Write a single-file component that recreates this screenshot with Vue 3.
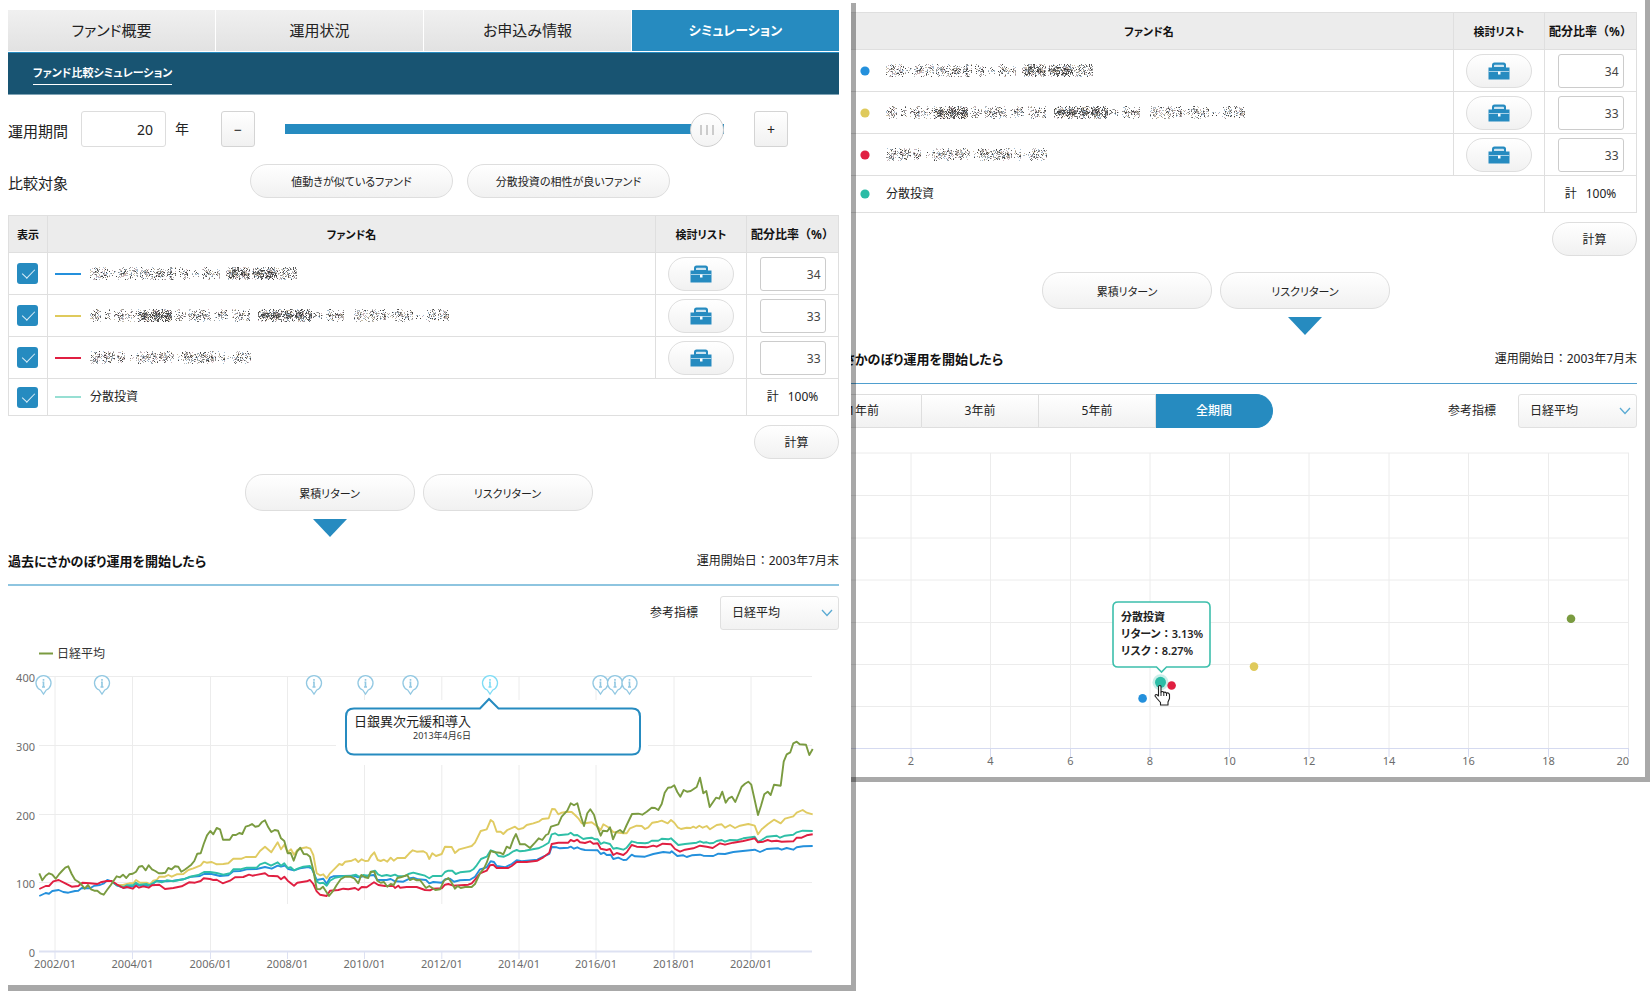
<script setup>
import { ref } from 'vue'

const tabs = ['ファンド概要', '運用状況', 'お申込み情報', 'シミュレーション']
const years = ref(20)
const periods = ['1年前', '3年前', '5年前', '全期間']

// Each masked name is a list of [start, end, density] runs along the line.
const funds = [
  { color: '#2490dc', share: 34, mask: [[0, 18, 0.5], [19, 27, 0.2], [28, 48, 0.42], [50, 86, 0.42], [89, 100, 0.34], [102, 110, 0.16], [112, 130, 0.4], [136, 160, 0.7], [162, 188, 0.7], [188, 207, 0.5]] },
  { color: '#dfca5c', share: 33, mask: [[0, 11, 0.42], [15, 21, 0.3], [24, 34, 0.45], [35, 48, 0.3], [48, 82, 0.75], [84, 96, 0.36], [98, 121, 0.45], [124, 138, 0.4], [142, 160, 0.4], [168, 222, 0.72], [223, 233, 0.25], [236, 254, 0.42], [264, 296, 0.4], [297, 304, 0.22], [305, 323, 0.45], [326, 334, 0.22], [336, 346, 0.32], [348, 359, 0.42]] },
  { color: '#e01f41', share: 33, mask: [[0, 25, 0.46], [27, 35, 0.36], [38, 44, 0.2], [46, 68, 0.4], [69, 84, 0.46], [86, 92, 0.2], [92, 126, 0.45], [128, 135, 0.38], [136, 141, 0.18], [142, 161, 0.42]] },
]

function speckle(runs, seed) {
  let s = seed
  const rnd = () => {
    s = (s + 0x6d2b79f5) | 0
    let t = Math.imul(s ^ (s >>> 15), 1 | s)
    t = (t + Math.imul(t ^ (t >>> 7), 61 | t)) ^ t
    return ((t ^ (t >>> 14)) >>> 0) / 4294967296
  }
  const shades = ['#666', '#999', '#bbb', '#cbbfa5', '#a5bed2', '#8a8a8a', '#ccb4bc', '#444']
  const paths = shades.map(() => '')
  for (const [a, b, density] of runs) {
    const half = density < 0.27 ? 3 : 6
    const dark = density > 0.6
    for (let x = a; x < b; x++) {
      const edge = 1 - 0.4 * Math.abs(Math.cos(((x - a) / 12) * Math.PI))
      for (let y = -half; y <= half; y++) {
        const fall = 1.3 - Math.abs(y) / (half + 1)
        if (rnd() < density * edge * fall * 1.35) {
          let k = Math.floor(rnd() * shades.length)
          if (dark && rnd() < 0.4) k = rnd() < 0.5 ? 0 : 7
          paths[k] += `M${x} ${y + 7}h1v1h-1z`
        }
      }
    }
  }
  return shades.map((fill, i) => ({ fill, d: paths[i] }))
}
const masks = funds.map((f, i) => speckle(f.mask, 4711 + i * 977))

// Line chart
const toPoints = (raw) =>
  raw.trim().split(/\s+/).map((p) => {
    const [x, y] = p.split(',').map(Number)
    return `${(x / 3).toFixed(1)},${(540 + y / 3).toFixed(1)}`
  }).join(' ')

const series = [
  {
    color: '#e0cb62',
    raw: `340,1028 350,1034 369,1035 388,1030 400,1030 408,1020 420,1028 440,1028 450,1033 460,1022 470,1020 478,1010 495,1010 505,1005 515,1010 530,1003 550,1002 565,990 580,985 602,976 611,965 620,968 635,966 650,973 670,972 685,970 700,956 725,956 737,951 767,951 780,933 795,920 814,937 833,907 843,928 853,914 863,937 873,928 882,944 892,930 905,925 920,922 931,926 940,945 950,1000 960,1006 970,1003 980,1015 990,1000 1005,985 1018,972 1027,975 1036,965 1055,962 1066,957 1075,966 1085,958 1095,963 1105,962 1113,948 1123,937 1133,960 1142,963 1152,959 1162,965 1172,953 1181,962 1192,954 1215,954 1228,940 1238,931 1250,935 1270,934 1280,940 1288,957 1297,940 1308,948 1325,942 1335,920 1355,921 1365,939 1378,928 1400,922 1415,918 1425,908 1442,873 1460,868 1472,840 1480,846 1490,875 1502,875 1510,882 1522,870 1545,860 1555,868 1570,864 1580,855 1600,850 1618,844 1627,837 1646,835 1656,807 1665,808 1675,823 1685,818 1702,815 1715,816 1725,825 1735,835 1745,850 1755,850 1775,847 1790,858 1802,870 1810,853 1825,862 1840,876 1870,880 1880,880 1890,865 1910,857 1925,858 1935,867 1945,862 1957,848 1975,845 1985,842 2003,850 2013,840 2023,848 2033,862 2043,867 2060,863 2072,864 2080,860 2088,864 2098,857 2108,863 2120,858 2130,868 2150,855 2165,853 2175,863 2190,855 2205,864 2220,857 2245,852 2264,857 2274,883 2285,868 2303,853 2322,839 2342,850 2355,836 2380,829 2390,818 2408,810 2420,818 2438,823`,
  },
  {
    color: '#2490dc',
    raw: `118,1068 137,1059 147,1061 157,1053 176,1050 190,1056 205,1058 225,1053 235,1052 245,1044 270,1045 283,1037 300,1035 312,1030 322,1020 335,1024 350,1036 370,1043 400,1039 410,1034 420,1037 450,1037 470,1023 500,1024 520,1022 550,1018 575,1010 600,1008 612,1002 635,1002 660,1008 685,1006 700,994 720,993 740,988 770,987 795,981 815,986 833,977 843,980 855,977 865,987 882,991 900,985 925,981 935,985 950,1020 970,1016 980,1031 990,1013 1000,1009 1060,1007 1075,1012 1090,1009 1122,1005 1132,1020 1160,1020 1172,1017 1185,1024 1210,1025 1230,1015 1240,1013 1255,1018 1278,1020 1288,1030 1300,1026 1325,1028 1335,1018 1350,1016 1362,1025 1380,1021 1410,1019 1425,1010 1440,988 1460,982 1472,964 1482,966 1490,978 1515,982 1535,972 1550,961 1565,964 1612,959 1630,950 1648,942 1655,921 1670,922 1680,925 1705,923 1713,920 1722,926 1732,922 1742,927 1755,930 1793,931 1802,942 1812,938 1820,945 1832,944 1840,957 1855,953 1870,960 1880,959 1895,944 1905,949 1935,950 1960,942 1990,936 2010,938 2015,934 2032,948 2050,946 2060,951 2075,946 2100,944 2110,947 2140,948 2155,941 2175,942 2200,936 2264,929 2280,936 2300,927 2335,925 2345,929 2360,924 2380,929 2390,922 2410,919 2438,918`,
  },
  {
    color: '#2fbfa7',
    raw: `340,1028 350,1036 370,1041 380,1036 400,1036 408,1028 418,1034 440,1032 448,1036 470,1023 485,1027 500,1021 520,1024 550,1018 570,1010 595,1005 612,996 630,996 650,999 670,1004 690,1000 700,988 720,988 740,983 770,983 780,973 795,968 813,977 833,967 843,977 853,970 863,984 872,982 882,991 895,985 910,980 930,978 940,992 950,1025 960,1030 970,1028 980,1037 990,1022 1005,1013 1020,1010 1035,1008 1055,1007 1068,1004 1078,1010 1090,1005 1105,1008 1115,995 1125,992 1134,1003 1145,1008 1160,1005 1172,1008 1185,1004 1195,1009 1215,1008 1225,1002 1240,998 1255,1002 1275,1007 1288,1015 1298,1008 1325,1008 1335,996 1345,992 1357,992 1367,1002 1380,997 1410,994 1420,988 1430,976 1443,957 1460,950 1472,931 1485,936 1495,948 1512,950 1525,944 1540,934 1550,930 1560,934 1575,932 1590,929 1615,925 1630,918 1646,908 1655,883 1665,880 1675,886 1690,884 1705,883 1712,878 1722,886 1732,885 1750,897 1760,895 1775,893 1785,898 1793,898 1802,912 1812,907 1830,912 1840,926 1850,924 1870,929 1880,923 1895,904 1910,908 1935,910 1945,908 1955,902 1975,902 1985,896 2005,898 2013,895 2025,906 2035,915 2055,912 2090,908 2100,904 2110,908 2120,907 2130,910 2140,909 2150,903 2165,900 2175,905 2190,900 2210,901 2230,895 2264,890 2274,905 2285,900 2300,890 2330,887 2340,893 2355,887 2380,884 2390,877 2408,872 2438,873`,
  },
  {
    color: '#e01f41',
    raw: `118,1047 137,1038 147,1038 160,1024 176,1020 196,1030 215,1040 235,1038 247,1028 270,1030 292,1032 302,1027 320,1023 335,1023 350,1033 370,1044 380,1041 398,1046 408,1037 417,1043 430,1039 446,1043 456,1036 478,1034 495,1047 520,1044 545,1039 567,1027 585,1028 602,1023 611,1015 630,1017 640,1020 650,1019 668,1030 690,1022 705,1012 730,1011 747,1004 757,1007 795,1000 805,1007 833,1009 843,1018 853,1010 863,1022 882,1037 892,1028 920,1024 930,1020 940,1032 950,1054 960,1064 980,1068 990,1052 1015,1050 1030,1046 1045,1048 1065,1044 1075,1050 1085,1041 1100,1042 1122,1027 1135,1035 1155,1038 1180,1038 1185,1044 1195,1037 1200,1043 1220,1041 1250,1041 1275,1050 1290,1051 1300,1046 1325,1045 1335,1034 1345,1032 1360,1037 1405,1034 1415,1030 1425,1019 1440,1000 1460,992 1470,976 1480,974 1490,984 1525,984 1535,978 1550,966 1580,966 1612,962 1630,952 1648,938 1655,912 1675,908 1705,908 1712,900 1722,904 1732,899 1740,907 1755,909 1770,904 1780,911 1793,910 1802,926 1820,930 1830,927 1840,945 1850,939 1870,945 1880,937 1895,915 1910,920 1940,922 1960,917 1970,920 1988,911 2013,913 2025,927 2040,935 2055,929 2080,925 2100,917 2120,920 2138,924 2160,910 2175,914 2200,908 2230,903 2264,895 2274,907 2290,905 2303,900 2315,904 2330,902 2345,905 2380,904 2390,893 2405,893 2420,886 2438,883`,
  },
  {
    color: '#7a9b40',
    raw: `118,1000 127,1021 137,1007 147,1000 157,1004 167,1016 176,1004 186,993 196,983 205,979 215,1002 225,1019 235,1025 244,1033 254,1046 264,1035 273,1048 283,1052 292,1052 301,1060 311,1064 321,1050 331,1037 340,1024 350,1009 360,1012 369,1004 379,1014 388,1003 398,1001 408,995 417,980 427,978 437,991 446,976 456,988 466,993 476,1000 486,1000 496,998 505,984 515,988 525,979 535,980 544,995 554,989 564,982 574,974 583,963 592,941 602,940 611,912 621,886 631,873 640,883 650,864 660,868 669,899 689,899 698,885 708,885 718,879 727,882 737,860 747,857 756,852 766,860 776,858 785,847 795,841 805,862 814,876 824,870 834,872 843,895 853,903 863,940 872,939 881,962 891,935 901,923 911,942 921,943 930,950 940,990 950,1047 960,1048 969,1040 987,1068 1000,1052 1010,1035 1022,1018 1035,1010 1050,1010 1063,1015 1075,1030 1084,1005 1095,1012 1105,1014 1112,995 1123,995 1132,1022 1142,1028 1152,1026 1162,1040 1172,1032 1181,1035 1192,1014 1202,1012 1222,1005 1230,1020 1240,1016 1250,1021 1260,1020 1278,1044 1288,1038 1306,1050 1320,1048 1332,1022 1345,1014 1355,1028 1365,1046 1373,1038 1382,1044 1395,1041 1415,1041 1425,1032 1440,1000 1452,985 1460,968 1472,933 1485,937 1500,938 1510,943 1520,920 1530,925 1540,898 1548,882 1560,913 1575,913 1590,924 1605,908 1616,895 1627,900 1638,885 1645,882 1653,860 1675,853 1685,830 1702,812 1712,790 1722,796 1732,790 1742,828 1752,858 1762,820 1771,808 1782,824 1792,860 1802,887 1809,872 1822,874 1830,862 1839,898 1848,877 1860,870 1870,878 1880,855 1896,822 1915,821 1927,824 1940,815 1955,803 1965,804 1975,810 1985,792 1994,758 2004,743 2014,742 2023,736 2032,756 2041,770 2051,750 2061,755 2072,753 2090,741 2100,713 2110,760 2119,753 2129,801 2148,773 2158,776 2167,755 2177,788 2186,775 2196,770 2206,786 2225,740 2235,731 2245,725 2254,734 2264,780 2274,825 2283,797 2293,763 2303,755 2312,765 2322,734 2342,737 2351,665 2360,643 2371,637 2380,610 2390,605 2399,613 2418,614 2428,645 2438,627`,
  },
].map((s) => ({ color: s.color, points: toPoints(s.raw) }))

const yTicks = [
  { v: 400, y: 676.5 }, { v: 300, y: 745.5 }, { v: 200, y: 814.5 }, { v: 100, y: 882.5 }, { v: 0, y: 951.5 },
]
const xTicks = [
  { t: '2002/01', x: 55, end: 951 }, { t: '2004/01', x: 132.5, end: 951 }, { t: '2006/01', x: 210.5, end: 951 },
  { t: '2008/01', x: 287.5, end: 904 }, { t: '2010/01', x: 364.5, end: 900 }, { t: '2012/01', x: 441.8, end: 904 },
  { t: '2014/01', x: 519, end: 951 }, { t: '2016/01', x: 596, end: 951 }, { t: '2018/01', x: 674, end: 951 },
  { t: '2020/01', x: 751, end: 951 },
]
const pins = [43.5, 102, 314, 365.5, 410.5, 490, 600.5, 615, 629.5]

// Scatter chart
const riskTicks = [911, 990.5, 1070.5, 1150, 1229.5, 1309, 1389, 1468.5, 1548.5, 1628.5].map((x, i) => ({ x, v: (i + 1) * 2 }))
const returnLines = [453, 495.5, 538, 580, 622.5, 664.5, 706.5]
const dots = [
  { x: 1142.6, y: 698.4, c: '#2490dc' }, { x: 1171.6, y: 685.5, c: '#e01f41' },
  { x: 1254, y: 666.6, c: '#dfca5c' }, { x: 1571, y: 618.8, c: '#7a9b40' },
]
</script>

<template>
  <div class="page">
    <main class="panel panel-main">
      <nav class="tabs">
        <button v-for="(t, i) in tabs" :key="t" type="button" class="tab" :class="{ active: i === 3 }">{{ t }}</button>
      </nav>
      <div class="subnav"><a href="#simulation">ファンド比較シミュレーション</a></div>

      <div class="term">
        <label class="term-label" for="years">運用期間</label>
        <input id="years" v-model="years" class="term-input" type="text" inputmode="numeric" />
        <span class="term-unit">年</span>
        <button type="button" class="step" aria-label="−" @click="years = Math.max(1, +years - 1)">−</button>
        <input v-model="years" class="slider" type="range" min="1" max="20" aria-labelledby="years" />
        <button type="button" class="step" aria-label="+" @click="years = Math.min(20, +years + 1)">+</button>
      </div>

      <div class="compare">
        <span class="term-label">比較対象</span>
        <div class="compare-buttons">
          <button type="button" class="pill">値動きが似ているファンド</button>
          <button type="button" class="pill">分散投資の相性が良いファンド</button>
        </div>
      </div>

      <table class="funds">
        <colgroup><col class="c-show" /><col /><col class="c-list" /><col class="c-share" /></colgroup>
        <thead>
          <tr><th>表示</th><th>ファンド名</th><th>検討リスト</th><th class="full">配分比率（%）</th></tr>
        </thead>
        <tbody>
          <tr v-for="(f, i) in funds" :key="i">
            <td><input type="checkbox" class="check" checked aria-label="表示" /></td>
            <td>
              <div class="name">
                <svg class="swatch" viewBox="0 0 26 2"><rect width="26" height="2" :fill="f.color" /></svg>
                <svg class="mask" width="360" height="15" viewBox="0 0 360 15" aria-hidden="true">
                  <path v-for="m in masks[i]" :key="m.fill" :d="m.d" :fill="m.fill" />
                </svg>
              </div>
            </td>
            <td class="mid">
              <button type="button" class="pill case" aria-label="検討リスト">
                <svg width="22" height="18" viewBox="0 0 22 18"><path d="M4 6V3q0-2.500 2.500-2.500h9Q18 .5 18 3v3" fill="#268bc0" /><path d="M6 5V3.500q0-.8.8-.8h8.400q.8 0 .8.8V5z" fill="#cfe5f1" /><path d="M.5 5.500h21v12H.5z" fill="#268bc0" /><path d="M.5 9.500h21" stroke="#a9d2e8" /><path d="M10 9.500h2.500v3H10z" fill="#fff" /></svg>
              </button>
            </td>
            <td class="mid"><input type="text" class="share" :value="f.share" aria-label="配分比率（%）" /></td>
          </tr>
          <tr class="total">
            <td><input type="checkbox" class="check" checked aria-label="表示" /></td>
            <td colspan="2">
              <div class="name"><svg class="swatch" viewBox="0 0 26 2"><rect width="26" height="2" fill="#97dfd3" /></svg>分散投資</div>
            </td>
            <td class="mid"><span class="sum"><span>計</span><span>100%</span></span></td>
          </tr>
        </tbody>
      </table>
      <div class="calc-row"><button type="button" class="pill calc">計算</button></div>

      <div class="modes">
        <div class="mode"><button type="button" class="pill mode-btn">累積リターン</button><svg width="34" height="18" viewBox="0 0 34 18"><path d="M0 0h34L17 18z" fill="#268bc0" /></svg></div>
        <div class="mode"><button type="button" class="pill mode-btn">リスクリターン</button></div>
      </div>

      <header class="section">
        <h2>過去にさかのぼり運用を開始したら</h2>
        <span class="full">運用開始日：2003年7月末</span>
      </header>

      <div class="filter">
        <label for="index-a">参考指標</label>
        <span class="select">
          <select id="index-a"><option>日経平均</option></select>
          <svg width="12" height="8" viewBox="0 0 12 8"><path d="M1 1l5 5.500L11 1" fill="none" stroke="#5aaad3" stroke-width="1.300" /></svg>
        </span>
      </div>

      <svg class="chart" viewBox="8 640 831 345">
        <path d="M39 653.500h14" stroke="#7a9b40" stroke-width="2" />
        <text x="57" y="658" class="legend">日経平均</text>
        <g stroke="#ececec">
          <path v-for="t in yTicks.slice(0, 4)" :key="t.v" :d="`M39 ${t.y}H812`" />
          <path v-for="t in xTicks" :key="t.t" :d="`M${t.x} 677V${t.end}`" />
        </g>
        <g stroke="#dde1f2">
          <path d="M39 951.500H812" stroke-width="2" />
          <path v-for="t in xTicks" :key="t.t" :d="`M${t.x} 952V959`" />
        </g>
        <text v-for="t in yTicks" :key="'y' + t.v" x="35" :y="t.y + 5" text-anchor="end" class="axis">{{ t.v }}</text>
        <text v-for="t in xTicks" :key="'x' + t.t" :x="t.x" y="968" text-anchor="middle" class="axis">{{ t.t }}</text>
        <polyline v-for="s in series" :key="s.color" :points="s.points" fill="none" :stroke="s.color" stroke-width="1.900" stroke-linejoin="round" />
        <path d="M336 700h312v65H336z" fill="#fff" />
        <g v-for="p in pins" :key="p" :transform="`translate(${p} 683)`" :stroke="p === 490 ? '#7fdcf5' : '#92c8e2'">
          <path d="M-2.800 7A7.500 7.500 0 1 1 2.800 7L0 11z" fill="#fff" stroke-width="1.300" />
          <path d="M0-4v1.800M-1-.7H0V4M-1.500 4h3" fill="none" stroke-width="1.600" />
        </g>
        <path d="M354 708.500H480l9-9.500 9.500 9.500H632q8 0 8 8V746.500q0 8-8 8H354q-8 0-8-8V716.500q0-8 8-8z" fill="#fff" stroke="#268bc0" stroke-width="2" />
        <text x="354" y="726" class="event">日銀異次元緩和導入</text>
        <text x="413" y="739" class="event-date">2013年4月6日</text>
      </svg>
    </main>

    <section class="panel panel-side">
      <div class="side-body">
        <table class="funds side">
          <colgroup><col class="c-show" /><col /><col class="c-list" /><col class="c-share" /></colgroup>
          <thead>
            <tr><th></th><th>ファンド名</th><th>検討リスト</th><th class="full">配分比率（%）</th></tr>
          </thead>
          <tbody>
            <tr v-for="(f, i) in funds" :key="i">
              <td></td>
              <td>
                <div class="name dotted">
                  <svg width="10" height="10" viewBox="0 0 10 10"><circle cx="5" cy="5" r="4.600" :fill="f.color" /></svg>
                  <svg class="mask" width="360" height="15" viewBox="0 0 360 15" aria-hidden="true">
                    <path v-for="m in masks[i]" :key="m.fill" :d="m.d" :fill="m.fill" />
                  </svg>
                </div>
              </td>
              <td class="mid">
                <button type="button" class="pill case" aria-label="検討リスト">
                  <svg width="22" height="18" viewBox="0 0 22 18"><path d="M4 6V3q0-2.500 2.500-2.500h9Q18 .5 18 3v3" fill="#268bc0" /><path d="M6 5V3.500q0-.8.8-.8h8.400q.8 0 .8.8V5z" fill="#cfe5f1" /><path d="M.5 5.500h21v12H.5z" fill="#268bc0" /><path d="M.5 9.500h21" stroke="#a9d2e8" /><path d="M10 9.500h2.500v3H10z" fill="#fff" /></svg>
                </button>
              </td>
              <td class="mid"><input type="text" class="share" :value="f.share" aria-label="配分比率（%）" /></td>
            </tr>
            <tr class="total">
              <td></td>
              <td colspan="2">
                <div class="name dotted"><svg width="10" height="10" viewBox="0 0 10 10"><circle cx="5" cy="5" r="4.600" fill="#2bbca6" /></svg>分散投資</div>
              </td>
              <td class="mid"><span class="sum"><span>計</span><span>100%</span></span></td>
            </tr>
          </tbody>
        </table>
        <div class="calc-row"><button type="button" class="pill calc">計算</button></div>

        <div class="modes">
          <div class="mode"><button type="button" class="pill mode-btn">累積リターン</button></div>
          <div class="mode"><button type="button" class="pill mode-btn">リスクリターン</button><svg width="34" height="18" viewBox="0 0 34 18"><path d="M0 0h34L17 18z" fill="#268bc0" /></svg></div>
        </div>

        <header class="section">
          <h2>過去にさかのぼり運用を開始したら</h2>
          <span class="full">運用開始日：2003年7月末</span>
        </header>

        <div class="filter">
          <div class="periods">
            <button v-for="(p, i) in periods" :key="p" type="button" :class="{ active: i === 3 }">{{ p }}</button>
          </div>
          <label for="index-b">参考指標</label>
          <span class="select">
            <select id="index-b"><option>日経平均</option></select>
            <svg width="12" height="8" viewBox="0 0 12 8"><path d="M1 1l5 5.500L11 1" fill="none" stroke="#5aaad3" stroke-width="1.300" /></svg>
          </span>
        </div>

        <svg class="chart" viewBox="805 438 832 339">
          <g stroke="#ececec">
            <path v-for="y in returnLines" :key="y" :d="`M831 ${y}H1629`" />
            <path v-for="t in riskTicks" :key="t.v" :d="`M${t.x} 453V748`" />
          </g>
          <g stroke="#d5daf0">
            <path d="M831 748.500H1629" />
            <path v-for="t in riskTicks" :key="t.v" :d="`M${t.x} 749V757`" />
          </g>
          <text v-for="t in riskTicks" :key="'r' + t.v" :x="t.v === 20 ? 1629 : t.x" y="765" :text-anchor="t.v === 20 ? 'end' : 'middle'" class="axis">{{ t.v }}</text>
          <circle v-for="d in dots" :key="d.c" :cx="d.x" :cy="d.y" r="4.300" :fill="d.c" />
          <circle cx="1160.500" cy="682.300" r="8" fill="#2bbca6" opacity=".25" />
          <circle cx="1160.500" cy="682.300" r="5.500" fill="#2bbca6" />
          <path d="M1118 602h87q5 0 5 5v55q0 5-5 5h-38.500l-5 5-5-5H1118q-5 0-5-5v-55q0-5 5-5z" fill="#fff" stroke="#3dbfac" stroke-width="1.600" />
          <g class="tip">
            <text x="1121" y="621">分散投資</text>
            <text x="1121" y="638">リターン<tspan class="full">：</tspan>3.13%</text>
            <text x="1121" y="655">リスク<tspan class="full">：</tspan>8.27%</text>
          </g>
          <path transform="translate(1154 685)" d="M4.500 11V2q0-1.500 1.300-1.500T7 2v5q1.800-1.200 2.600.4 1.800-.9 2.600.6 2.600-.7 3.300 1.500v4l-1.500 3.500v3H6.500v-2.500L3 13.500 1 11q.2-2 2-1.200z" fill="#fff" stroke="#222" stroke-width="1.100" stroke-linejoin="round" />
          <path d="M1161 692v4M1163.800 692.500v3.500M1166.500 693v3" stroke="#222" />
        </svg>
      </div>
    </section>
  </div>
</template>

<style>
body {
  margin: 0;
  background: #fff;
}
</style>

<style scoped>
.page {
  display: grid;
  grid-template-columns: minmax(0, 848fr) minmax(0, 794fr);
  align-items: start;
  padding-left: 8px;
  font-family: "Noto Sans", "Noto Sans CJK JP", sans-serif;
  font-size: 12px;
  line-height: 18px;
  color: #222;
  font-feature-settings: "palt";
}
.page * {
  box-sizing: border-box;
}
button,
input,
select {
  margin: 0;
  padding: 0;
  font: inherit;
  font-feature-settings: inherit;
  color: inherit;
}
svg {
  display: block;
  flex: none;
}
.full {
  font-feature-settings: normal;
}
.panel-main {
  position: relative;
  z-index: 1;
  margin-top: 3px;
  padding: 7px 12px 0 0;
  border: solid rgba(0, 0, 0, 0.34);
  border-width: 0 5px 6px 0;
  background: #fff padding-box;
}
.panel-side {
  margin-left: -6px;
  padding: 12px 8px 0 0;
  overflow: hidden;
  border: solid #a9a9a9;
  border-width: 0 5px 5px 0;
}
.side-body {
  margin-left: -45px;
}

.tabs {
  display: grid;
  grid-template-columns: repeat(4, 1fr);
  gap: 1px;
}
.tab {
  height: 41px;
  padding-bottom: 2px;
  border: 0;
  background: linear-gradient(#f0f0f0, #e2e2e2);
  font-size: 15px;
}
.tab.active {
  background: #268bc0;
  color: #fff;
  font-size: 13px;
  font-weight: 700;
}
.subnav {
  display: flex;
  align-items: center;
  height: 43px;
  margin-top: 1px;
  padding: 2px 0 0 25px;
  border-top: 1px solid #268bc0;
  border-bottom: 1px solid #7fa3b5;
  background: #185472;
}
.subnav a {
  padding-bottom: 2px;
  border-bottom: 1px solid #fff;
  color: #fff;
  font-size: 11px;
  font-weight: 700;
  text-decoration: none;
}

.term {
  display: flex;
  align-items: center;
  margin: 16px 51px 0 0;
}
.term-label {
  width: 73px;
  padding-top: 3px;
  font-size: 15px;
}
.term-input {
  width: 85px;
  height: 36px;
  padding-right: 12px;
  border: 1px solid #ddd;
  border-radius: 3px;
  background: #fff;
  font-size: 14px;
  text-align: right;
}
.term-unit {
  width: 46px;
  margin-left: 9px;
  font-size: 14px;
}
.step {
  width: 34px;
  height: 36px;
  padding-top: 2px;
  border: 1px solid #d4d4d4;
  border-radius: 3px;
  background: linear-gradient(#fff, #f1f1f1);
  font-size: 14px;
}
.slider {
  flex: 1;
  min-width: 0;
  height: 36px;
  margin: 0 30px;
  padding-top: 1px;
  appearance: none;
  background: linear-gradient(#268bc0, #268bc0) center / 100% 10px no-repeat;
}
.slider::-webkit-slider-thumb {
  appearance: none;
  width: 34px;
  height: 34px;
  border: 1px solid #cfcfcf;
  border-radius: 50%;
  background:
    linear-gradient(#ccc, #ccc) 9px center / 2px 10px no-repeat,
    linear-gradient(#ccc, #ccc) center / 2px 10px no-repeat,
    linear-gradient(#ccc, #ccc) 21px center / 2px 10px no-repeat,
    linear-gradient(#fff, #f3f3f3);
}
.compare {
  display: flex;
  align-items: center;
  margin-top: 17px;
}
.compare-buttons {
  display: flex;
  gap: 14px;
  margin: 0 auto 0 169px;
}
.pill {
  width: 203px;
  height: 34px;
  padding-top: 2px;
  border: 1px solid #dedede;
  border-radius: 18px;
  background: linear-gradient(#fff, #f1f1f1);
  font-size: 11px;
}

.funds {
  width: 100%;
  margin-top: 17px;
  border-collapse: collapse;
  table-layout: fixed;
}
.funds.side {
  margin-top: 0;
}
.c-show {
  width: 39px;
}
.c-list {
  width: 91px;
}
.c-share {
  width: 92px;
}
.funds th,
.funds td {
  height: 42px;
  padding: 0;
  border: 1px solid #dfdfdf;
}
.funds th {
  height: 37px;
  padding-top: 2px;
  background: #ececec;
  color: #111;
  font-size: 11px;
  font-weight: 700;
}
.funds th.full {
  font-size: 12px;
}
.funds .total td {
  height: 37px;
}
.mid {
  text-align: center;
}
.name {
  display: flex;
  align-items: center;
  gap: 9px;
  padding-left: 7px;
}
.name.dotted {
  gap: 16px;
  padding-left: 15px;
}
.swatch {
  width: 26px;
  height: 2px;
}
.check {
  display: block;
  position: relative;
  width: 21px;
  height: 21px;
  margin: 0 0 0 8px;
  appearance: none;
  border-radius: 3px;
  background: #268bc0;
}
.check::before {
  content: "";
  position: absolute;
  top: 3px;
  left: 8px;
  width: 6px;
  height: 11px;
  border: solid #dceef7;
  border-width: 0 1px 1px 0;
  transform: rotate(44deg);
}
.case {
  display: grid;
  place-items: center;
  width: 66px;
  margin: 0 auto;
  padding: 0;
}
.share {
  display: block;
  width: 66px;
  height: 34px;
  margin: 0 auto;
  padding: 2px 4px 0 0;
  border: 1px solid #ccc;
  border-radius: 3px;
  background: #fff;
  color: #444;
  text-align: right;
}
.sum {
  display: flex;
  justify-content: center;
  gap: 9px;
}
.calc-row {
  display: flex;
  justify-content: flex-end;
  margin-top: 9px;
}
.calc {
  width: 85px;
  font-size: 12px;
}

.modes {
  display: flex;
  justify-content: center;
  align-items: flex-start;
  gap: 8px;
  height: 63px;
  margin: 15px 10px 0 0;
}
.panel-side .modes {
  margin-top: 16px;
}
.mode {
  display: flex;
  flex-direction: column;
  align-items: center;
  gap: 8px;
}
.mode-btn {
  width: 170px;
  height: 37px;
}
.section {
  display: flex;
  justify-content: space-between;
  align-items: center;
  height: 49px;
  border-bottom: 2px solid #8ec5e0;
}
.panel-side .section {
  border-bottom: 1px solid #4f9fcf;
}
.section h2 {
  margin: 0;
  color: #111;
  font-size: 13px;
  line-height: 20px;
}
.filter {
  display: flex;
  justify-content: flex-end;
  align-items: center;
  margin-top: 10px;
}
.select {
  display: grid;
  align-items: center;
  width: 119px;
  margin-left: 22px;
}
.select select,
.select svg {
  grid-area: 1 / 1;
}
.select svg {
  justify-self: end;
  margin-right: 6px;
  pointer-events: none;
}
.select select {
  height: 34px;
  padding-left: 11px;
  appearance: none;
  border: 1px solid #e0e0e0;
  border-radius: 3px;
  background: linear-gradient(#fff, #f2f2f2);
}
.periods {
  display: grid;
  grid-template-columns: repeat(4, 117px);
  margin-right: auto;
}
.periods button {
  height: 34px;
  border: solid #dedede;
  border-width: 1px 1px 1px 0;
  background: linear-gradient(#fff, #f1f1f1);
}
.periods button:first-child {
  border-left-width: 1px;
  border-radius: 17px 0 0 17px;
}
.periods .active {
  border-color: #268bc0;
  border-radius: 0 17px 17px 0;
  background: #268bc0;
  color: #fff;
  font-weight: 500;
}

.chart {
  width: 100%;
  height: auto;
  margin-top: 10px;
}
.axis {
  fill: #6c6c6c;
  font-size: 11px;
}
.legend {
  fill: #333;
  font-size: 12px;
}
.event {
  fill: #222;
  font-size: 13px;
}
.event-date {
  fill: #333;
  font-size: 9px;
}
.tip {
  fill: #222;
  font-size: 11px;
  font-weight: 600;
}
</style>
